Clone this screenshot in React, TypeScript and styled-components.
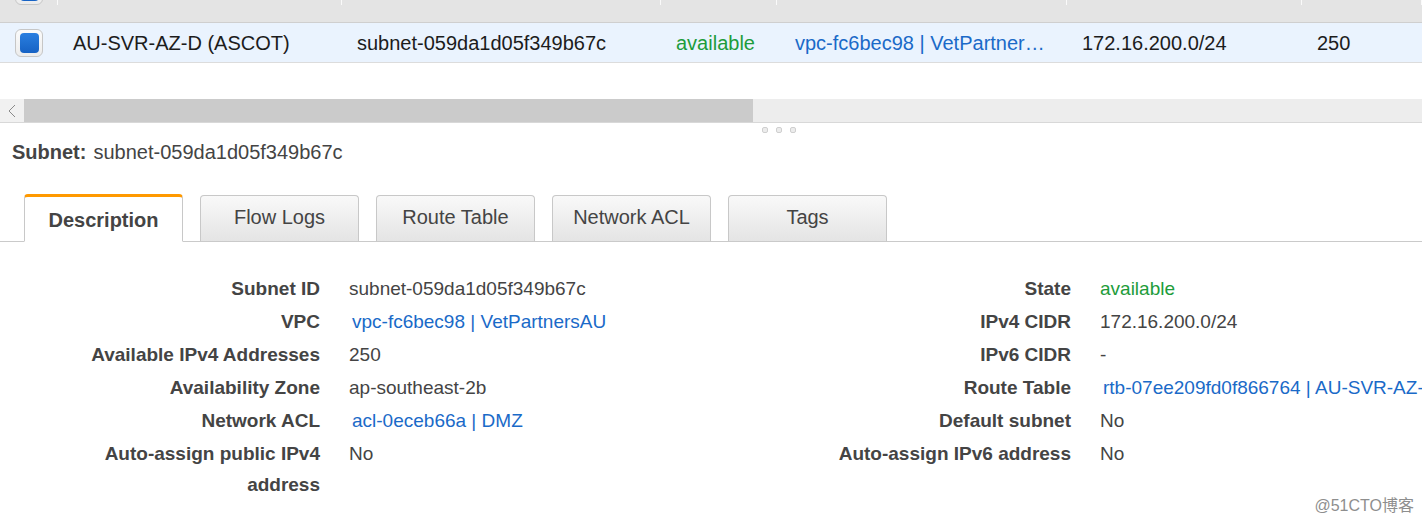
import styled, { createGlobalStyle } from 'styled-components';

const GlobalStyle = createGlobalStyle`
  html, body {
    margin: 0;
    padding: 0;
    background: #fff;
  }
  body {
    font-family: "Liberation Sans", Arial, sans-serif;
  }
`;

const Page = styled.div`
  position: relative;
  width: 1422px;
  height: 519px;
  overflow: hidden;
  background: #fff;
`;

const columns = '58px 284px 319px 116px 290px 235px 1fr';

const HeaderRow = styled.div`
  display: grid;
  grid-template-columns: ${columns};
  height: 22px;
  background: #e4e4e4;
  border-bottom: 1px solid #cfcfcf;
  overflow: hidden;
`;

const HeaderCell = styled.div`
  position: relative;
  &::after {
    content: '';
    position: absolute;
    right: 0;
    top: 0;
    width: 1px;
    height: 5px;
    background: #fafafa;
  }
`;

const DataRow = styled.div`
  display: grid;
  grid-template-columns: ${columns};
  align-items: center;
  height: 40px;
  padding-top: 1px;
  box-sizing: border-box;
  background: #eaf3fe;
  border-bottom: 1px solid #dcdcdc;
  font-size: 20px;
  color: #1c1c1c;
`;

const Cell = styled.div<{ $tone?: 'green' | 'blue' }>`
  padding: 0 15px 0 ${(p) => (p.$tone === 'blue' ? '18px' : '15px')};
  white-space: nowrap;
  overflow: hidden;
  text-overflow: ellipsis;
  color: ${(p) => (p.$tone === 'green' ? '#1d9c3b' : p.$tone === 'blue' ? '#1a6ac8' : 'inherit')};
`;

const CheckCell = styled.div`
  display: flex;
  justify-content: center;
`;

const CheckBox = styled.div<{ $clipped?: boolean }>`
  box-sizing: border-box;
  width: 28px;
  height: 28px;
  margin-top: ${(p) => (p.$clipped ? '-23px' : '0')};
  border: 1px solid #c6c6c6;
  border-radius: 6px;
  background: linear-gradient(#fbfbfb, #ececec);
  display: flex;
  align-items: center;
  justify-content: center;
  &::before {
    content: '';
    width: 19px;
    height: 20px;
    border-radius: 4px;
    background: linear-gradient(#2a7fe0, #1662c4);
  }
`;

const Gap = styled.div`
  height: 36px;
`;

const ScrollBar = styled.div`
  display: flex;
  height: 23px;
  background: #ededed;
  border-bottom: 1px solid #d8d8d8;
`;

const ScrollArrow = styled.div`
  width: 24px;
  display: flex;
  align-items: center;
  justify-content: center;
  background: #f1f1f1;
`;

const ScrollThumb = styled.div`
  width: 729px;
  background: #cbcbcb;
`;

const Handle = styled.div`
  display: flex;
  gap: 8px;
  padding: 4px 0 0 762px;
  height: 8px;
`;

const HandleDot = styled.span`
  box-sizing: border-box;
  width: 6px;
  height: 6px;
  border-radius: 2px;
  border: 1px solid #cfcfcf;
  background: #ececec;
`;

const Heading = styled.div`
  padding: 5px 0 0 12px;
  font-size: 20px;
  line-height: 24px;
  color: #444;
  b {
    margin-right: 7px;
  }
`;

const TabBar = styled.div`
  display: flex;
  align-items: flex-end;
  gap: 17px;
  margin-top: 30px;
  padding-left: 24px;
  height: 47px;
  border-bottom: 1px solid #cacaca;
`;

const Tab = styled.div<{ $active?: boolean }>`
  box-sizing: border-box;
  width: 159px;
  height: ${(p) => (p.$active ? '48px' : '47px')};
  margin-bottom: -1px;
  display: flex;
  align-items: center;
  justify-content: center;
  font-size: 20px;
  color: #444;
  border: 1px solid #c8c8c8;
  border-radius: 4px 4px 0 0;
  ${(p) =>
    p.$active
      ? `
    font-weight: bold;
    background: #fff;
    border-top: 3px solid #f90;
    border-bottom: 1px solid #fff;
    padding-top: 2px;
  `
      : `
    background: linear-gradient(#f9f9f9, #e4e4e4);
    border-bottom: 1px solid #cacaca;
    padding-bottom: 2px;
  `}
`;

const Details = styled.div`
  display: flex;
  padding-top: 31px;
`;

const DetailColumn = styled.div<{ $offset: number }>`
  width: 711px;
  box-sizing: border-box;
  padding-left: ${(p) => p.$offset}px;
  display: grid;
  grid-template-columns: 250px 1fr;
  column-gap: 29px;
  row-gap: 2px;
  align-content: start;
  font-size: 19px;
  line-height: 31px;
  color: #444;
`;

const Label = styled.div`
  font-weight: bold;
  text-align: right;
`;

const Value = styled.div<{ $tone?: 'green' | 'blue' }>`
  white-space: nowrap;
  padding-left: ${(p) => (p.$tone === 'blue' ? '3px' : '0')};
  color: ${(p) => (p.$tone === 'green' ? '#1d9c3b' : p.$tone === 'blue' ? '#1a6ac8' : '#444')};
`;

const Watermark = styled.div`
  position: absolute;
  right: 8px;
  bottom: 3px;
  font-family: "Liberation Sans", "Noto Sans CJK SC", sans-serif;
  font-size: 16px;
  color: #8e8e8e;
`;

type Detail = { label: string; value: string; tone?: 'green' | 'blue' };

const leftDetails: Detail[] = [
  { label: 'Subnet ID', value: 'subnet-059da1d05f349b67c' },
  { label: 'VPC', value: 'vpc-fc6bec98 | VetPartnersAU', tone: 'blue' },
  { label: 'Available IPv4 Addresses', value: '250' },
  { label: 'Availability Zone', value: 'ap-southeast-2b' },
  { label: 'Network ACL', value: 'acl-0eceb66a | DMZ', tone: 'blue' },
  { label: 'Auto-assign public IPv4 address', value: 'No' },
];

const rightDetails: Detail[] = [
  { label: 'State', value: 'available', tone: 'green' },
  { label: 'IPv4 CIDR', value: '172.16.200.0/24' },
  { label: 'IPv6 CIDR', value: '-' },
  { label: 'Route Table', value: 'rtb-07ee209fd0f866764 | AU-SVR-AZ-D (ASCOT)', tone: 'blue' },
  { label: 'Default subnet', value: 'No' },
  { label: 'Auto-assign IPv6 address', value: 'No' },
];

const tabs = ['Description', 'Flow Logs', 'Route Table', 'Network ACL', 'Tags'];

const DetailList = ({ items, offset }: { items: Detail[]; offset: number }) => (
  <DetailColumn $offset={offset}>
    {items.map((d) => [
      <Label key={`${d.label}-l`}>{d.label}</Label>,
      <Value key={`${d.label}-v`} $tone={d.tone}>
        {d.value}
      </Value>,
    ])}
  </DetailColumn>
);

export default function App() {
  return (
    <Page>
      <GlobalStyle />
      <HeaderRow>
        <HeaderCell as={CheckCell}>
          <CheckBox $clipped />
        </HeaderCell>
        {Array.from({ length: 6 }).map((_, i) => (
          <HeaderCell key={i} />
        ))}
      </HeaderRow>
      <DataRow>
        <CheckCell>
          <CheckBox />
        </CheckCell>
        <Cell>AU-SVR-AZ-D (ASCOT)</Cell>
        <Cell>subnet-059da1d05f349b67c</Cell>
        <Cell $tone="green">available</Cell>
        <Cell $tone="blue">vpc-fc6bec98 | VetPartnersAU</Cell>
        <Cell>172.16.200.0/24</Cell>
        <Cell>250</Cell>
      </DataRow>
      <Gap />
      <ScrollBar>
        <ScrollArrow>
          <svg width="8" height="14" viewBox="0 0 8 14">
            <polyline points="7,1 1,7 7,13" fill="none" stroke="#8a8a8a" strokeWidth="1" />
          </svg>
        </ScrollArrow>
        <ScrollThumb />
      </ScrollBar>
      <Handle>
        <HandleDot />
        <HandleDot />
        <HandleDot />
      </Handle>
      <Heading>
        <b>Subnet:</b>subnet-059da1d05f349b67c
      </Heading>
      <TabBar>
        {tabs.map((t, i) => (
          <Tab key={t} $active={i === 0}>
            {t}
          </Tab>
        ))}
      </TabBar>
      <Details>
        <DetailList items={leftDetails} offset={70} />
        <DetailList items={rightDetails} offset={110} />
      </Details>
      <Watermark>@51CTO博客</Watermark>
    </Page>
  );
}
